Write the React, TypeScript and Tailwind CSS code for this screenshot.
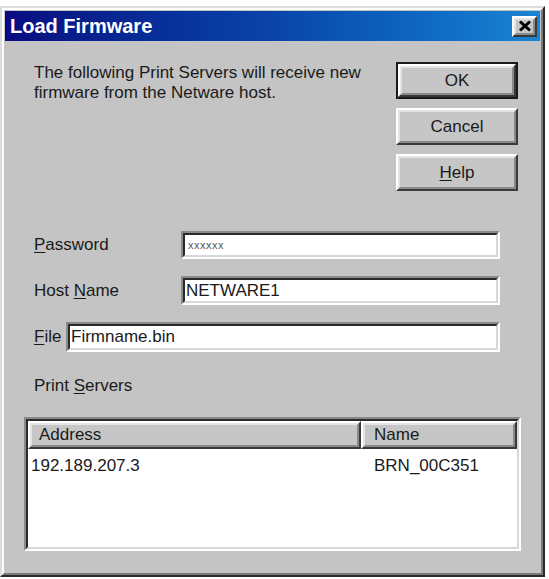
import React from "react";

const font = { fontFamily: '"Liberation Sans", Arial, sans-serif' };

function Raised({ children, className = "", inner = "" }: { children?: React.ReactNode; className?: string; inner?: string }) {
  return (
    <div className={`border-2 border-t-white border-l-white border-r-[#3a3a3a] border-b-[#3a3a3a] ${className}`}>
      <div className={`h-full w-full border-2 border-t-[#e4e4e4] border-l-[#e4e4e4] border-r-[#8a8a8a] border-b-[#8a8a8a] bg-[#c6c6c6] ${inner}`}>
        {children}
      </div>
    </div>
  );
}

function Sunken({ children, className = "", inner = "" }: { children?: React.ReactNode; className?: string; inner?: string }) {
  return (
    <div className={`border-2 border-t-[#8a8a8a] border-l-[#8a8a8a] border-r-white border-b-white ${className}`}>
      <div className={`h-full w-full border-2 border-t-[#2a2a2a] border-l-[#2a2a2a] border-r-[#d8d8d8] border-b-[#d8d8d8] bg-white ${inner}`}>
        {children}
      </div>
    </div>
  );
}

function Button({ label, def = false }: { label: React.ReactNode; def?: boolean }) {
  if (def) {
    return (
      <div className="h-[37px] w-[122px] border-2 border-[#1a1a1a]">
        <Raised className="h-full w-full" inner="flex items-center justify-center text-[17px] text-[#1a1a1a]">
          {label}
        </Raised>
      </div>
    );
  }
  return (
    <Raised className="h-[37px] w-[122px]" inner="flex items-center justify-center text-[17px] text-[#1a1a1a]">
      {label}
    </Raised>
  );
}

export default function App() {
  return (
    <div className="h-[579px] w-[549px] bg-white pt-[6px]" style={font}>
      <div className="h-[571px] w-[545px] border-2 border-t-[#dcdcdc] border-l-[#dcdcdc] border-r-[#2a2a2a] border-b-[#2a2a2a]">
        <div className="h-full w-full border-2 border-t-white border-l-white border-r-[#7a7a7a] border-b-[#7a7a7a] bg-[#c4c4c4] pt-[1px] pl-[1px] pr-[1px]">
          {/* Title bar */}
          <div className="flex h-[30px] items-center justify-between bg-gradient-to-r from-[#0a0a80] via-[#0a44aa] to-[#1a84d4] pl-[5px] pr-[3px]">
            <span className="text-[20px] font-bold leading-none text-white">Load Firmware</span>
            <Raised className="h-[21px] w-[25px]" inner="flex items-center justify-center">
              <svg width="14" height="12" viewBox="0 0 14 12">
                <path d="M2 1.5 L12 10.5 M12 1.5 L2 10.5" stroke="#000" strokeWidth="3" />
              </svg>
            </Raised>
          </div>

          {/* Content */}
          <div className="pl-[19px] pr-[22px] pt-[21px]">
            <div className="flex justify-between">
              <div className="ml-[10px] mt-[1px] text-[17px] leading-[20px] text-[#1a1a1a]">
                <div>The following Print Servers will receive new</div>
                <div>firmware from the Netware host.</div>
              </div>
              <div className="flex flex-col gap-[9px]">
                <Button label="OK" def />
                <Button label="Cancel" />
                <Button
                  label={
                    <span>
                      <span className="underline underline-offset-2">H</span>elp
                    </span>
                  }
                />
              </div>
            </div>

            <div className="ml-[10px] mr-[18px] mt-[40px] flex flex-col gap-[17px] text-[17px] text-[#1a1a1a]">
              <div className="flex h-[28px] items-center">
                <div className="w-[147px]">
                  <span className="underline underline-offset-2">P</span>assword
                </div>
                <Sunken className="h-[28px] flex-1" inner="flex items-center pl-[3px]">
                  <span className="text-[11px] leading-none tracking-[0.5px] text-[#555]">xxxxxx</span>
                </Sunken>
              </div>
              <div className="flex h-[29px] items-center">
                <div className="w-[147px]">
                  Host <span className="underline underline-offset-2">N</span>ame
                </div>
                <Sunken className="h-[29px] flex-1" inner="flex items-center pl-[1px] text-[17px]">
                  NETWARE1
                </Sunken>
              </div>
              <div className="flex h-[30px] items-center">
                <div className="w-[32px]">
                  <span className="underline underline-offset-2">F</span>ile
                </div>
                <Sunken className="h-[30px] flex-1" inner="flex items-center pl-[1px] text-[17px]">
                  Firmname.bin
                </Sunken>
              </div>
            </div>

            <div className="ml-[10px] mt-[24px] text-[17px] leading-[20px] text-[#1a1a1a]">
              Print <span className="underline underline-offset-2">S</span>ervers
            </div>

            <Sunken className="mt-[21px] h-[134px] w-[497px]" inner="flex flex-col text-[17px] text-[#1a1a1a]">
              <div className="flex h-[28px]">
                <Raised className="h-full w-[333px]" inner="flex items-center pl-[7px]">
                  Address
                </Raised>
                <Raised className="h-full flex-1" inner="flex items-center pl-[9px]">
                  Name
                </Raised>
              </div>
              <div className="flex pt-[7px] leading-[20px]">
                <div className="w-[333px] pl-[3px]">192.189.207.3</div>
                <div className="pl-[13px]">BRN_00C351</div>
              </div>
            </Sunken>
          </div>
        </div>
      </div>
    </div>
  );
}
